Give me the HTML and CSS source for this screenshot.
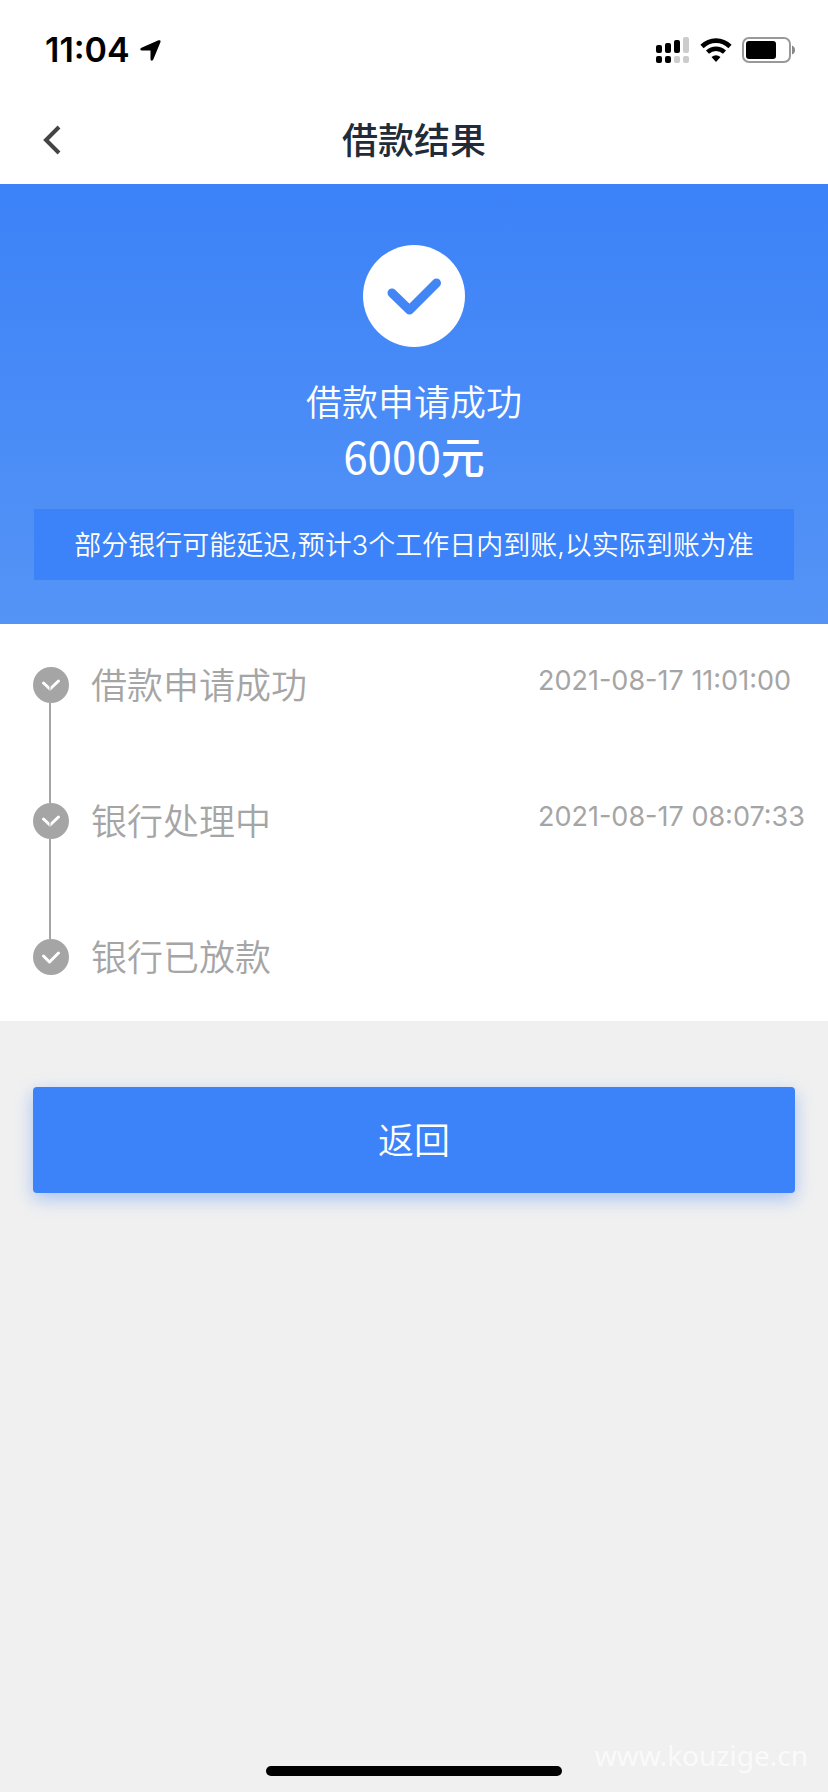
FILE: index.html
```
<!DOCTYPE html>
<html lang="zh-CN">
<head>
  <meta charset="UTF-8">
  <meta name="viewport" content="width=device-width, initial-scale=1.0">
  <title>借款结果</title>
  <link rel="stylesheet" href="styles.css">
</head>
<body>
  <div class="status-bar">
    <div class="status-left">
      <span class="time">11:04</span>
      <svg class="location" width="21" height="21" viewBox="0 0 21 21"><path d="M18.500 0.300Q21 -0.200 20.500 2L13.500 19Q13 20.700 11.700 20.700Q10.500 20.700 10.500 19V10.500H2Q0.300 10.500 0.300 9.300Q0.300 8.300 2 7.500Z"/></svg>
    </div>
    <div class="status-right">
      <svg width="34" height="28" viewBox="0 0 34 28">
        <g fill="#000">
          <rect x="0" y="9" width="6" height="8" rx="2"/>
          <rect x="9" y="7" width="6" height="10" rx="2"/>
          <rect x="18" y="4" width="6" height="13" rx="2"/>
          <rect x="0" y="20" width="6" height="7" rx="2"/>
          <rect x="9" y="20" width="6" height="7" rx="2"/>
        </g>
        <g fill="#ccc">
          <rect x="27" y="1" width="6" height="16" rx="2"/>
          <rect x="18" y="20" width="6" height="7" rx="2"/>
          <rect x="27" y="20" width="6" height="7" rx="2"/>
        </g>
      </svg>
      <svg width="32" height="24" viewBox="0 0 32 24">
        <path d="M2 8.500C10 0.600 22 0.600 30 8.500" fill="none" stroke="#000" stroke-width="4.600"/>
        <path d="M7.500 14.200C12.500 9.500 19.500 9.500 24.500 14.200" fill="none" stroke="#000" stroke-width="4.400"/>
        <path d="M11.500 19Q16 15.500 20.500 19L16 24Z"/>
      </svg>
      <svg width="54" height="26" viewBox="0 0 54 26">
        <rect x="1" y="1" width="47" height="24" rx="6" fill="none" stroke="#999" stroke-width="2"/>
        <rect x="4" y="4" width="30" height="18" rx="3"/>
        <path d="M50 8.500Q53 9.500 53 13Q53 16.500 50 17.500Z" fill="#888"/>
      </svg>
    </div>
  </div>

  <header class="nav">
    <button type="button" class="back" aria-label="返回上一页">
      <svg width="18" height="30" viewBox="0 0 18 30"><path d="M16 2L3 15L16 28" fill="none" stroke="#444" stroke-width="4"/></svg>
    </button>
    <h1>借款结果</h1>
  </header>

  <section class="hero">
    <svg width="102" height="102" viewBox="0 0 102 102">
      <circle cx="51" cy="51" r="51" fill="#fff"/>
      <path d="M29 48L46.500 65L73.500 38" fill="none" stroke="#4285f5" stroke-width="9" stroke-linecap="round" stroke-linejoin="round"/>
    </svg>
    <h2>借款申请成功</h2>
    <p class="amount">6000<span>元</span></p>
    <p class="notice">部分银行可能延迟,预计3个工作日内到账,以实际到账为准</p>
  </section>

  <ul class="steps">
    <li>
      <svg class="dot" width="36" height="36" viewBox="0 0 36 36"><circle cx="18" cy="18" r="18" fill="#a5a5a5"/><path d="M10.500 16L17 22L25.500 14" fill="none" stroke="#fff" stroke-width="3" stroke-linecap="round"/><path d="M17 18V27" stroke="#a5a5a5" stroke-width="1"/></svg>
      <span class="label">借款申请成功</span>
      <time>2021-08-17 11:01:00</time>
    </li>
    <li>
      <svg class="dot" width="36" height="36" viewBox="0 0 36 36"><circle cx="18" cy="18" r="18" fill="#a5a5a5"/><path d="M10.500 16L17 22L25.500 14" fill="none" stroke="#fff" stroke-width="3" stroke-linecap="round"/><path d="M17 18V27" stroke="#a5a5a5" stroke-width="1"/></svg>
      <span class="label">银行处理中</span>
      <time>2021-08-17 08:07:33</time>
    </li>
    <li>
      <svg class="dot" width="36" height="36" viewBox="0 0 36 36"><circle cx="18" cy="18" r="18" fill="#a5a5a5"/><path d="M10.500 17L16.500 23L25.500 14" fill="none" stroke="#fff" stroke-width="3" stroke-linecap="round" stroke-linejoin="round"/></svg>
      <span class="label">银行已放款</span>
    </li>
  </ul>

  <main class="actions">
    <button type="button" class="submit">返回</button>
  </main>

  <div class="home-bar"></div>
  <div class="watermark">www.kouzige.cn</div>
</body>
</html>
```
FILE: styles.css
```
* {
  box-sizing: border-box;
}
body {
  margin: 0;
  min-height: 100vh;
  display: flex;
  flex-direction: column;
  position: relative;
  background-color: #f0f0f0;
  font-family: Inter, "Noto Sans CJK SC", sans-serif;
}
h1, h2, p, ul {
  margin: 0;
  padding: 0;
}
svg {
  display: block;
  flex: none;
}
button {
  border: none;
  font-family: inherit;
  cursor: pointer;
}
.status-bar {
  height: 96px;
  padding: 4px 32px 0 45px;
  display: flex;
  align-items: center;
  justify-content: space-between;
  background-color: #fff;
}
.status-left, .status-right {
  display: flex;
  align-items: center;
}
.status-left {
  gap: 10px;
}
.status-right {
  gap: 10px;
}
.time {
  font-size: 34px;
  font-weight: 600;
  line-height: 40px;
}
.nav {
  height: 88px;
  display: grid;
  grid-template-columns: 100px 1fr 100px;
  align-items: center;
  background-color: #fff;
}
.back {
  height: 88px;
  padding: 0 0 0 43px;
  background: none;
}
.nav h1 {
  padding-top: 2px;
  color: #222b38;
  font-size: 36px;
  font-weight: 500;
  line-height: 48px;
  text-align: center;
}
.hero {
  padding: 61px 34px 44px;
  display: flex;
  flex-direction: column;
  align-items: center;
  color: #fff;
  background: linear-gradient(#3c82f8, #5594f6);
}
.hero h2 {
  margin-top: 30px;
  font-size: 36px;
  font-weight: 350;
  line-height: 52px;
}
.amount {
  font-family: "Noto Sans CJK SC", sans-serif;
  font-size: 44px;
  line-height: 52px;
}
.amount span {
  font-weight: 500;
}
.notice {
  width: 100%;
  margin-top: 28px;
  padding: 17px 8px 14px;
  background-color: #3c82f8;
  font-size: 27px;
  font-weight: 350;
  line-height: 40px;
  text-align: center;
}
.steps {
  padding: 43px 33px 45px;
  background-color: #fff;
  color: #a5a5a5;
  list-style: none;
}
.steps li {
  height: 136px;
  display: grid;
  grid-template-columns: 58px 1fr 257px;
  align-items: start;
  position: relative;
}
.steps li:last-child {
  height: 37px;
}
.steps li:not(:last-child)::after {
  content: "";
  position: absolute;
  left: 16px;
  top: 36px;
  bottom: 0;
  width: 2px;
  background-color: #a5a5a5;
}
.label {
  font-size: 36px;
  font-weight: 350;
  line-height: 38px;
}
.steps time {
  font-size: 27px;
  line-height: 28px;
  white-space: nowrap;
}
.actions {
  flex: 1;
  padding: 66px 33px;
}
.submit {
  width: 100%;
  height: 106px;
  padding: 0 0 4px;
  border-radius: 4px;
  background-color: #3c82f8;
  box-shadow: 0 6px 18px rgba(60, 130, 248, 0.4);
  color: #fff;
  font-size: 36px;
  font-weight: 350;
}
.home-bar {
  width: 296px;
  height: 10px;
  margin: 0 auto 16px;
  border-radius: 5px;
  background-color: #000;
}
.watermark {
  position: absolute;
  right: 20px;
  bottom: 17px;
  color: #fafafa;
  font-family: "Noto Sans", sans-serif;
  font-size: 28px;
  line-height: 40px;
}
```
